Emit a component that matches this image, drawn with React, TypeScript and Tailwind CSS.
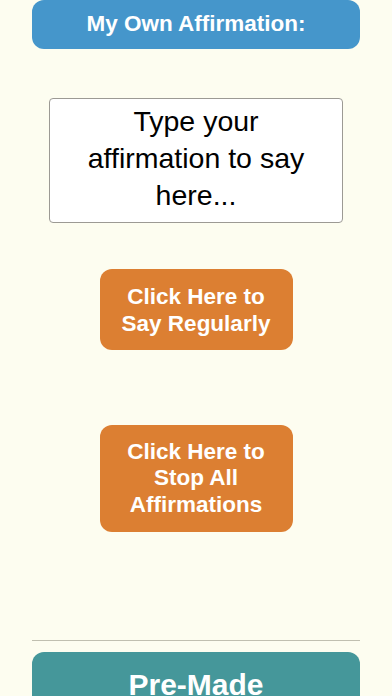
export default function App() {
  return (
    <div
      className="w-[392px] h-[696px] overflow-hidden bg-[#fdfdf0] flex flex-col items-center"
      style={{ fontFamily: '"Liberation Sans", Arial, sans-serif' }}
    >
      {/* Header */}
      <div className="shrink-0 w-[328px] h-[49px] rounded-xl bg-[#4596cb] flex items-center justify-center">
        <span className="text-white font-bold text-[22.5px] leading-none">My Own Affirmation:</span>
      </div>

      {/* Input box */}
      <div className="shrink-0 mt-[49px] w-[294px] h-[125px] rounded border border-[#9c9a94] bg-white flex items-center justify-center pb-[5px]">
        <p className="text-black text-[28.5px] leading-[37px] text-center">
          Type your<br />affirmation to say<br />here...
        </p>
      </div>

      {/* Say regularly */}
      <button className="shrink-0 mt-[46px] w-[193px] h-[81px] rounded-xl bg-[#dc7f32] flex items-center justify-center">
        <span className="text-white font-bold text-[22.5px] leading-[27px] text-center">
          Click Here to<br />Say Regularly
        </span>
      </button>

      {/* Stop all */}
      <button className="shrink-0 mt-[75px] w-[193px] h-[107px] rounded-xl bg-[#dc7f32] flex items-center justify-center">
        <span className="text-white font-bold text-[22.5px] leading-[26.5px] text-center">
          Click Here to<br />Stop All<br />Affirmations
        </span>
      </button>

      <div className="shrink-0 mt-[108px] w-[328px] h-px bg-[#c0bfb0]" />

      {/* Pre-made */}
      <div className="shrink-0 mt-[11px] w-[328px] h-[64px] rounded-xl bg-[#45979a] flex justify-center pt-[16px]">
        <span className="text-white font-bold text-[30px] leading-[34px]">Pre-Made</span>
      </div>
    </div>
  );
}
